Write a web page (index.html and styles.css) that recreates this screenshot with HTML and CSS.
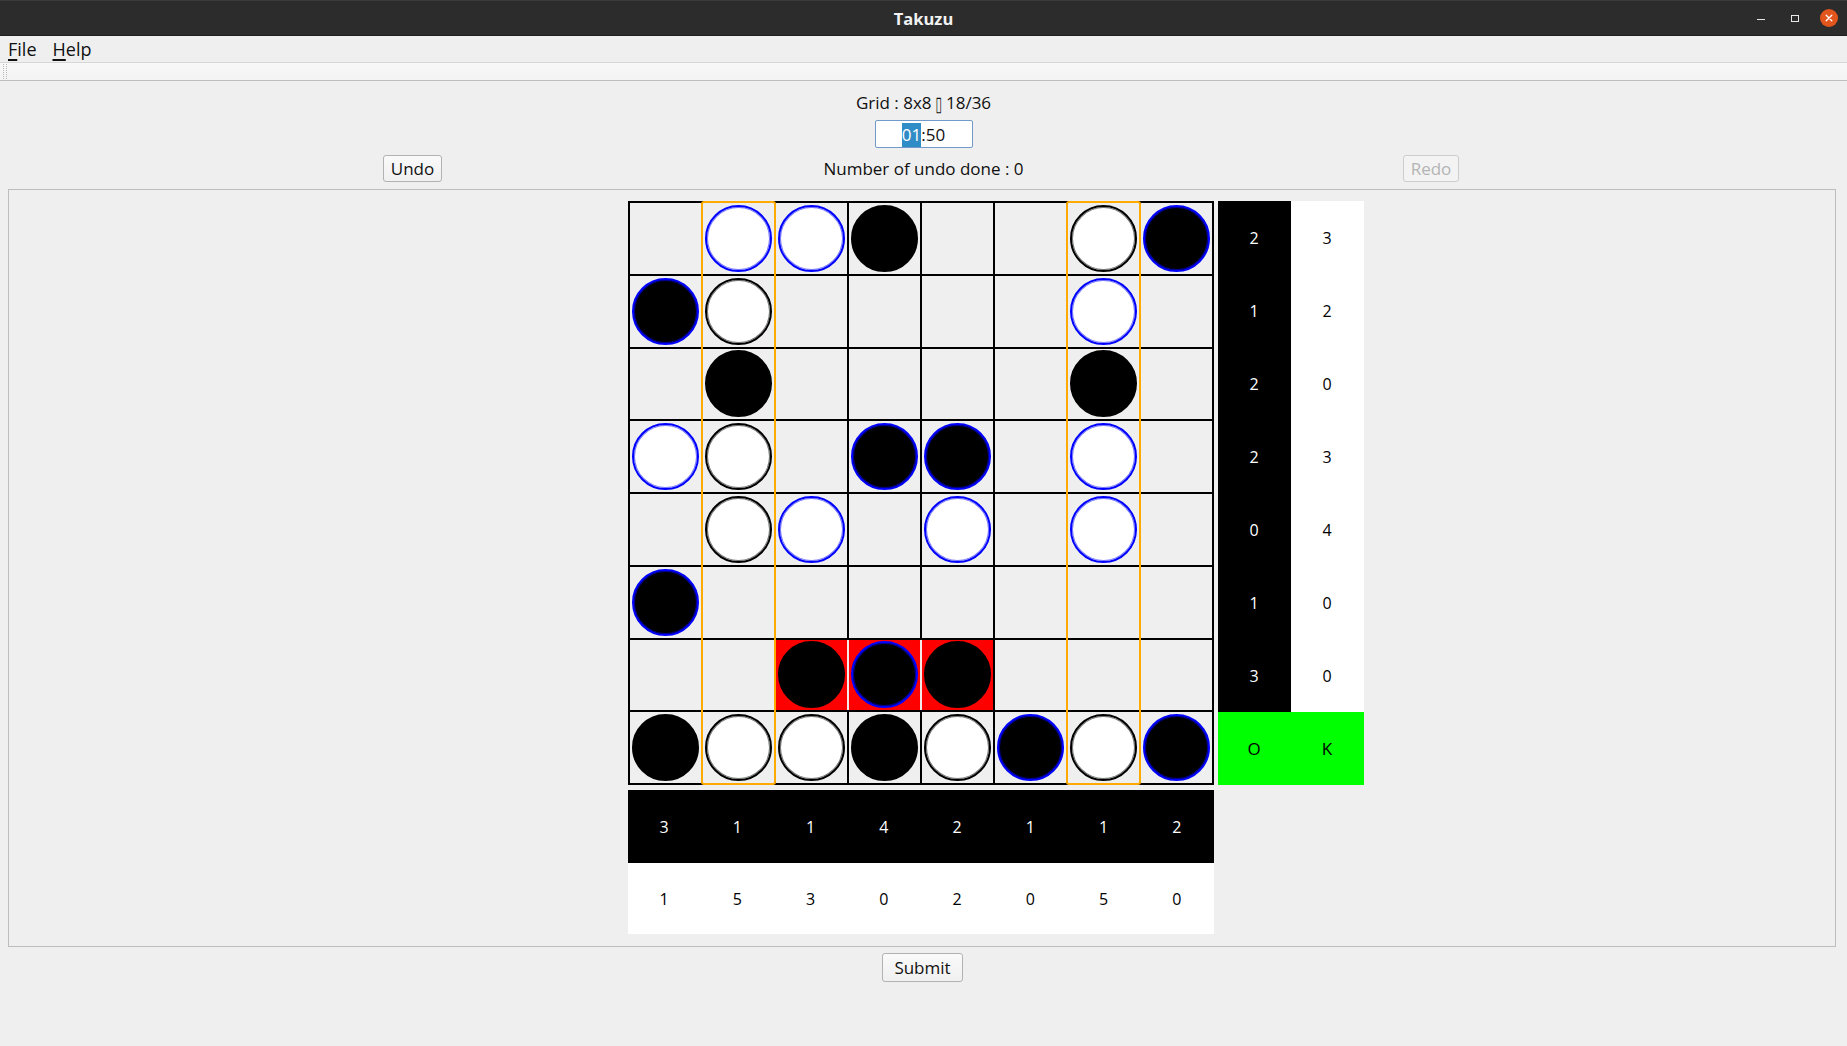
FILE: index.html
```html
<!DOCTYPE html>
<html lang="en">
<head>
<meta charset="utf-8">
<title>Takuzu</title>
<link rel="stylesheet" href="styles.css">
</head>
<body>
<div class="window">
  <header class="titlebar">
    <div></div>
    <div class="title">Takuzu</div>
    <div class="controls">
      <span class="ctl ctl-min"><span class="min-line"></span></span>
      <span class="ctl ctl-max"><span class="max-box"></span></span>
      <span class="ctl ctl-close">
        <svg width="18" height="18" viewBox="0 0 18 18"><circle cx="9" cy="9" r="9" fill="#e2561d"/><path d="M6.2 6.2 L11.8 11.8 M11.8 6.2 L6.2 11.8" stroke="#fff" stroke-width="1.3" stroke-linecap="round"/></svg>
      </span>
    </div>
  </header>
  <nav class="menubar">
    <span class="menu-item"><u>F</u>ile</span>
    <span class="menu-item"><u>H</u>elp</span>
  </nav>
  <div class="toolbar"><span class="handle"></span></div>

  <section class="info">
    <div class="grid-label">Grid : 8x8 <span class="tofu">▯</span> 18/36</div>
    <div class="timer"><span class="sel">01</span>:50</div>
    <div class="undo-row">
      <div class="cellcol"><button class="btn">Undo</button></div>
      <div class="cellcol undo-count">Number of undo done : 0</div>
      <div class="cellcol cellcol-right"><button class="btn btn-disabled" disabled>Redo</button></div>
    </div>
  </section>

  <main class="frame">
    <div class="board">
      <!-- row 1 -->
      <div class="cell"></div>
      <div class="cell"><span class="disc w fixed"></span></div>
      <div class="cell"><span class="disc w fixed"></span></div>
      <div class="cell"><span class="disc b"></span></div>
      <div class="cell"></div>
      <div class="cell"></div>
      <div class="cell"><span class="disc w"></span></div>
      <div class="cell"><span class="disc b fixed"></span></div>
      <!-- row 2 -->
      <div class="cell"><span class="disc b fixed"></span></div>
      <div class="cell"><span class="disc w"></span></div>
      <div class="cell"></div>
      <div class="cell"></div>
      <div class="cell"></div>
      <div class="cell"></div>
      <div class="cell"><span class="disc w fixed"></span></div>
      <div class="cell"></div>
      <!-- row 3 -->
      <div class="cell"></div>
      <div class="cell"><span class="disc b"></span></div>
      <div class="cell"></div>
      <div class="cell"></div>
      <div class="cell"></div>
      <div class="cell"></div>
      <div class="cell"><span class="disc b"></span></div>
      <div class="cell"></div>
      <!-- row 4 -->
      <div class="cell"><span class="disc w fixed"></span></div>
      <div class="cell"><span class="disc w"></span></div>
      <div class="cell"></div>
      <div class="cell"><span class="disc b fixed"></span></div>
      <div class="cell"><span class="disc b fixed"></span></div>
      <div class="cell"></div>
      <div class="cell"><span class="disc w fixed"></span></div>
      <div class="cell"></div>
      <!-- row 5 -->
      <div class="cell"></div>
      <div class="cell"><span class="disc w"></span></div>
      <div class="cell"><span class="disc w fixed"></span></div>
      <div class="cell"></div>
      <div class="cell"><span class="disc w fixed"></span></div>
      <div class="cell"></div>
      <div class="cell"><span class="disc w fixed"></span></div>
      <div class="cell"></div>
      <!-- row 6 -->
      <div class="cell"><span class="disc b fixed"></span></div>
      <div class="cell"></div>
      <div class="cell"></div>
      <div class="cell"></div>
      <div class="cell"></div>
      <div class="cell"></div>
      <div class="cell"></div>
      <div class="cell"></div>
      <!-- row 7 -->
      <div class="cell"></div>
      <div class="cell"></div>
      <div class="cell error"><span class="disc b"></span></div>
      <div class="cell error"><span class="disc b fixed"></span></div>
      <div class="cell error"><span class="disc b"></span></div>
      <div class="cell"></div>
      <div class="cell"></div>
      <div class="cell"></div>
      <!-- row 8 -->
      <div class="cell"><span class="disc b"></span></div>
      <div class="cell"><span class="disc w"></span></div>
      <div class="cell"><span class="disc w"></span></div>
      <div class="cell"><span class="disc b"></span></div>
      <div class="cell"><span class="disc w"></span></div>
      <div class="cell"><span class="disc b fixed"></span></div>
      <div class="cell"><span class="disc w"></span></div>
      <div class="cell"><span class="disc b fixed"></span></div>

      <span class="col-mark col-mark-2"></span>
      <span class="col-mark col-mark-7"></span>
    </div>

    <div class="side">
      <div class="cnt dark">2</div><div class="cnt light">3</div>
      <div class="cnt dark">1</div><div class="cnt light">2</div>
      <div class="cnt dark">2</div><div class="cnt light">0</div>
      <div class="cnt dark">2</div><div class="cnt light">3</div>
      <div class="cnt dark">0</div><div class="cnt light">4</div>
      <div class="cnt dark">1</div><div class="cnt light">0</div>
      <div class="cnt dark">3</div><div class="cnt light">0</div>
      <div class="cnt ok">O</div><div class="cnt ok">K</div>
    </div>

    <div class="bottom">
      <div class="bottom-row dark">
        <span>3</span><span>1</span><span>1</span><span>4</span><span>2</span><span>1</span><span>1</span><span>2</span>
      </div>
      <div class="bottom-row light">
        <span>1</span><span>5</span><span>3</span><span>0</span><span>2</span><span>0</span><span>5</span><span>0</span>
      </div>
    </div>
  </main>

  <div class="submit-row"><button class="btn btn-submit">Submit</button></div>
</div>
</body>
</html>
```
FILE: styles.css
```css
* { box-sizing: border-box; }

html, body {
  margin: 0;
  padding: 0;
  background: #efefef;
  font-family: "Open Sans", "Liberation Sans", sans-serif;
  font-size: 17px;
  color: #101010;
}

.window {
  width: 1847px;
  height: 1046px;
  overflow: hidden;
}

/* ---------- title bar ---------- */
.titlebar {
  height: 36px;
  background: #2c2c2c;
  border-top: 1px solid #3a3a3a;
  border-bottom: 1px solid #1f1f1f;
  display: grid;
  grid-template-columns: 1fr auto 1fr;
  align-items: center;
}
.title {
  color: #f2f2f2;
  font-weight: 700;
  font-size: 16.5px;
  line-height: 20px;
  padding-top: 2px;
}
.controls {
  justify-self: end;
  display: flex;
  gap: 16px;
  padding-right: 9px;
  align-items: center;
}
.ctl {
  width: 18px;
  height: 18px;
  display: flex;
  align-items: center;
  justify-content: center;
}
.ctl svg { display: block; }
.min-line {
  width: 8px;
  height: 1px;
  background: #e8e8e8;
  margin-top: 2px;
}
.max-box {
  width: 8px;
  height: 7px;
  border: 1px solid #e8e8e8;
}

/* ---------- menu bar ---------- */
.menubar {
  height: 26px;
  display: flex;
  gap: 16px;
  padding-left: 8px;
  line-height: 26px;
  font-size: 18px;
  color: #111;
}
.menu-item u {
  text-decoration: underline;
  text-decoration-thickness: 2px;
  text-underline-offset: 3px;
}

/* ---------- tool bar ---------- */
.toolbar {
  height: 19px;
  border-top: 1px solid #d6d6d6;
  border-bottom: 1px solid #bdbdbd;
  background: linear-gradient(#f8f8f8, #f3f3f3);
  padding: 1px 0 0 3px;
}
.handle {
  display: block;
  width: 4px;
  height: 15px;
  border-left: 1px dotted #b8b8b8;
  border-right: 1px dotted #b8b8b8;
}

/* ---------- info area ---------- */
.info {
  padding-top: 10px;
  display: flex;
  flex-direction: column;
  align-items: center;
}
.grid-label {
  line-height: 23px;
  height: 23px;
}
.tofu {
  font-family: "DejaVu Sans", sans-serif;
  font-size: 21px;
  line-height: 10px;
  display: inline-block;
  transform: scaleX(0.55);
  margin: 0 -3px;
  vertical-align: -2px;
}
.timer {
  margin-top: 6px;
  width: 98px;
  height: 28px;
  background: #fff;
  border: 1px solid #6f9acb;
  border-radius: 2px;
  text-align: center;
  line-height: 25px;
  padding-top: 1px;
}
.sel {
  background: #308cc6;
  color: #fff;
  display: inline-block;
  height: 24px;
  line-height: 24px;
}
.undo-row {
  align-self: stretch;
  margin-top: 7px;
  padding: 0 157px;
  display: grid;
  grid-template-columns: 1fr 1fr 1fr;
  align-items: center;
  height: 27px;
}
.cellcol {
  display: flex;
  justify-content: center;
  align-items: center;
}
.cellcol-right { padding-right: 7px; }

.btn {
  font-family: "Open Sans", "Liberation Sans", sans-serif;
  font-size: 17px;
  color: #111;
  height: 27px;
  line-height: 23px;
  padding: 0 7px;
  background: linear-gradient(#fafafa, #f0f0f0);
  border: 1px solid #b2b2b2;
  border-radius: 3px;
  margin: 0;
}
.btn-disabled {
  color: #b4b4b4;
  border-color: #cdcdcd;
  background: #f3f3f3;
}

/* ---------- game frame ---------- */
.frame {
  margin: 7px 11px 0 8px;
  border: 1px solid #bdbdbd;
  padding: 11px 3px 12px 0;
  display: grid;
  grid-template-columns: 1fr 586px 1fr;
  grid-template-rows: 584px 144px;
  row-gap: 5px;
}

.board {
  grid-column: 2;
  grid-row: 1;
  position: relative;
  background: #000;
  padding: 2px;
  display: grid;
  grid-template-columns: repeat(8, 1fr);
  grid-template-rows: repeat(8, 1fr);
  gap: 2px;
}
.cell {
  background: #efefef;
  display: flex;
  align-items: center;
  justify-content: center;
}
.cell.error { background: #ff0000; }
.cell.error + .cell.error { box-shadow: -2px 0 0 0 #f3eaea; }

.disc {
  display: block;
  width: 67px;
  height: 67px;
  border-radius: 50%;
  border: 2px solid #000;
  box-shadow: inset 0 0 0 1px rgba(0, 0, 0, 0.55);
}
.disc.w { background: #fff; }
.disc.b { background: #000; }
.disc.fixed {
  border-color: #0000ff;
  box-shadow: inset 0 0 0 1px rgba(0, 0, 255, 0.55);
}

.col-mark {
  position: absolute;
  top: 0;
  bottom: 0;
  width: 75px;
  border: 2px solid #ffaa00;
  border-radius: 3px;
  pointer-events: none;
}
.col-mark-2 { left: 73px; }
.col-mark-7 { left: 438px; }

.side {
  grid-column: 3;
  grid-row: 1;
  justify-self: start;
  margin-left: 4px;
  display: grid;
  grid-template-columns: 73px 73px;
  grid-template-rows: repeat(8, 73px);
}
.cnt {
  display: flex;
  align-items: center;
  justify-content: center;
  font-size: 16px;
}
.dark { background: #000; color: #fff; }
.light { background: #fff; color: #000; }
.ok { background: #00ff00; color: #000; font-size: 17px; }

.bottom {
  grid-column: 2;
  grid-row: 2;
  display: grid;
  grid-template-rows: 73px 71px;
}
.bottom-row {
  display: grid;
  grid-template-columns: repeat(8, 1fr);
  align-items: center;
  justify-items: center;
  font-size: 16px;
}

/* ---------- submit ---------- */
.submit-row {
  display: flex;
  justify-content: center;
  margin-top: 6px;
  padding-right: 2px;
}
.btn-submit {
  height: 29px;
  padding: 0 11px;
}
```
